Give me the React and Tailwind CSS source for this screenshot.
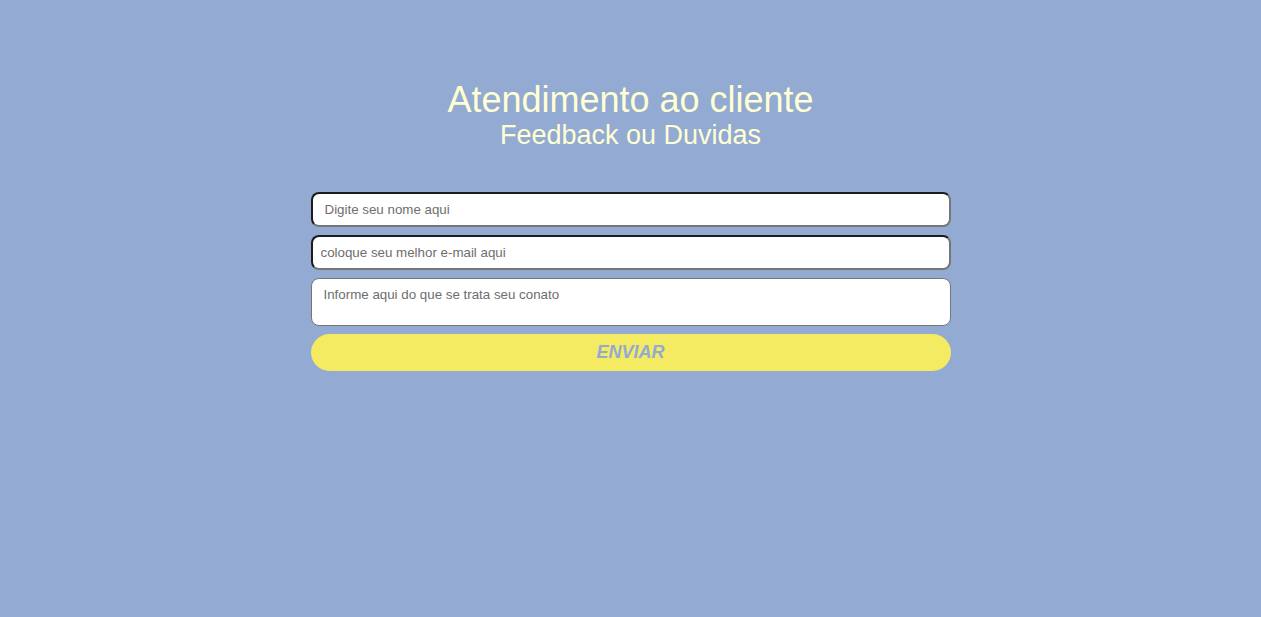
import React from 'react';

export default function App() {
  return (
    <div className="min-h-[617px] w-full bg-[#93aad3] font-['Liberation_Sans',Arial,sans-serif]">
      <div className="mx-auto flex w-[640px] flex-col items-center pt-[79px]">
        <h1 className="text-[36px] leading-[42px] text-[#ffffd4]">Atendimento ao cliente</h1>
        <h2 className="text-[27px] leading-[29px] text-[#ffffd4]">Feedback ou Duvidas</h2>

        <form className="mt-[42px] flex w-full flex-col gap-2" onSubmit={(e) => e.preventDefault()}>
          <input
            type="text"
            placeholder="Digite seu nome aqui"
            className="h-[35px] w-full rounded-lg border-2 border-t-[#1c1c1c] border-l-[#1c1c1c] border-b-[#767676] border-r-[#767676] bg-white px-3 text-[13.33px] text-gray-800 placeholder:text-[#6e6e6e] focus:outline-none"
          />
          <input
            type="email"
            placeholder="coloque seu melhor e-mail aqui"
            className="h-[35px] w-full rounded-lg border-2 border-t-[#1c1c1c] border-l-[#1c1c1c] border-b-[#767676] border-r-[#767676] bg-white px-2 text-[13.33px] text-gray-800 placeholder:text-[#6e6e6e] focus:outline-none"
          />
          <textarea
            placeholder="Informe aqui do que se trata seu conato"
            className="h-[48px] w-full resize-none rounded-lg border border-[#767676] bg-white px-3 pt-[8px] text-[13.33px] leading-[16px] text-gray-800 placeholder:text-[#6e6e6e] focus:outline-none"
          />
          <button
            type="submit"
            className="h-[37px] w-full rounded-full bg-[#f4eb62] text-[18px] font-bold italic text-[#93aad3]"
          >
            ENVIAR
          </button>
        </form>
      </div>
    </div>
  );
}
